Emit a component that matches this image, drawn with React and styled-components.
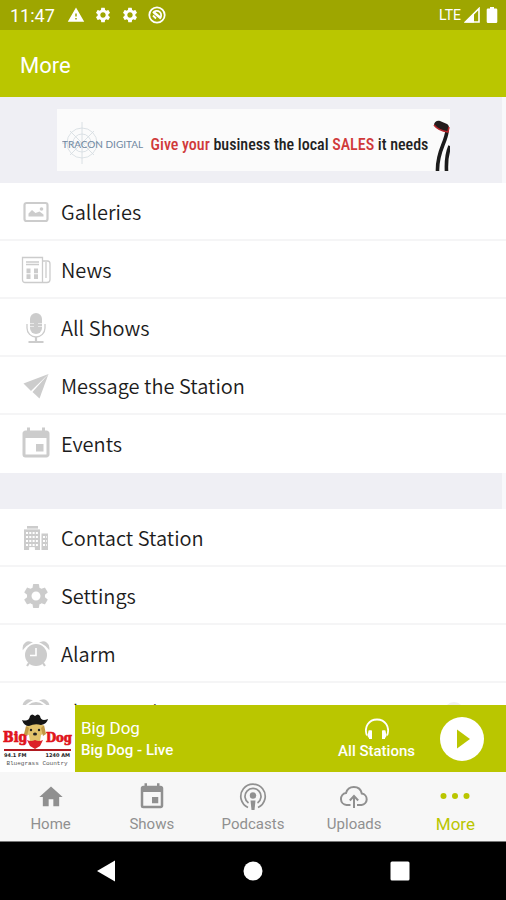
import React from 'react';
import styled, { ThemeProvider, createGlobalStyle } from 'styled-components';
import { MdEvent, MdHome, MdSettings, MdWarning } from 'react-icons/md';

const theme = {
  colors: {
    primary: '#bac600',
    primaryDark: '#9ea600',
    section: '#efeff4',
    divider: '#f5f5f6',
    icon: '#cccccc',
    tab: '#909090',
    tabBar: '#f7f7f7',
    text: '#1c1c1c',
  },
  fonts: {
    base: 'Roboto, sans-serif',
    list: '"Noto Sans CJK SC", "Noto Sans", sans-serif',
    banner: '"Roboto Condensed", "Liberation Sans Narrow", "Liberation Sans", sans-serif',
  },
};

const GlobalStyle = createGlobalStyle`
  * {
    box-sizing: border-box;
  }
  body {
    margin: 0;
    background: #fff;
  }
  button {
    border: 0;
    padding: 0;
    background: none;
    font: inherit;
    color: inherit;
    cursor: pointer;
  }
  svg {
    display: block;
    flex: none;
  }
`;

const AppContainer = styled.div`
  display: flex;
  flex-direction: column;
  height: 100vh;
  font-family: ${(props) => props.theme.fonts.base};
  color: ${(props) => props.theme.colors.text};
`;

const StatusBar = styled.div`
  display: flex;
  flex: none;
  align-items: center;
  justify-content: space-between;
  height: 30px;
  padding: 0 8px 0 10px;
  background: ${(props) => props.theme.colors.primaryDark};
  color: #fff;
  font-size: 18px;
`;

const StatusGroup = styled.div`
  display: flex;
  align-items: center;
  gap: ${(props) => props.$gap}px;
`;

const Time = styled.span`
  margin-right: 3px;
`;

const Network = styled.span`
  font-size: 14px;
`;

const Header = styled.header`
  display: flex;
  flex: none;
  align-items: center;
  height: 67px;
  padding: 3px 20px 0;
  background: ${(props) => props.theme.colors.primary};
  color: #fff;
`;

const Title = styled.h1`
  margin: 0;
  font-size: 22px;
  font-weight: 400;
`;

const Content = styled.main`
  flex: 1;
  min-height: 0;
  overflow-y: auto;
  scrollbar-width: none;
`;

const BannerArea = styled.div`
  padding: 12px 52px 12px 57px;
  border-right: 4px solid #f8f8fb;
  background: ${(props) => props.theme.colors.section};
`;

const Banner = styled.a`
  display: flex;
  align-items: center;
  justify-content: space-between;
  height: 62px;
  padding-top: 8px;
  padding-left: 5px;
  background: #fbfbfb;
  color: #222;
  text-decoration: none;
  white-space: nowrap;
`;

const Slogan = styled.span`
  font-family: ${(props) => props.theme.fonts.banner};
  font-size: 16px;
  font-weight: 500;
`;

const Accent = styled.span`
  color: #d0393a;
`;

const Menu = styled.ul`
  margin: 0;
  padding: 0;
  list-style: none;
`;

const MenuItem = styled.li`
  border-bottom: 2px solid ${(props) => props.theme.colors.divider};

  &:last-child {
    border-bottom-color: transparent;
  }
`;

const MenuRow = styled.button`
  display: flex;
  align-items: center;
  gap: 10px;
  width: 100%;
  height: 56px;
  padding: 1px 32px 0 21px;
  font-family: ${(props) => props.theme.fonts.list};
  font-size: 20px;
  font-weight: 350;
  line-height: 28px;
  text-align: left;
`;

const MenuIcon = styled.span`
  display: flex;
  flex: none;
  justify-content: center;
  width: 30px;
  color: ${(props) => props.theme.colors.icon};
`;

const Divider = styled.div`
  height: 36px;
  border-right: 4px solid #f8f8fb;
  background: ${(props) => props.theme.colors.section};
`;

const SwitchLabel = styled.label`
  flex: 1;
`;

const Switch = styled.input`
  appearance: none;
  display: flex;
  align-items: center;
  width: 30px;
  height: 14px;
  margin: 0;
  border-radius: 7px;
  background: #e0e0e0;

  &::before {
    content: '';
    width: 20px;
    height: 20px;
    border-radius: 50%;
    background: #f0f0f0;
  }
`;

const Player = styled.section`
  display: flex;
  flex: none;
  align-items: center;
  height: 67px;
  padding-right: 22px;
  background: ${(props) => props.theme.colors.primary};
  color: #fff;
`;

const Cover = styled.div`
  flex: none;
  align-self: stretch;
  width: 75px;
  background: #fff;
`;

const Track = styled.div`
  flex: 1;
  padding-left: 6px;
`;

const TrackTitle = styled.div`
  font-size: 17px;
  line-height: 22px;
`;

const TrackShow = styled.div`
  font-size: 15px;
  font-weight: 500;
  line-height: 22px;
`;

const StationsButton = styled.button`
  display: flex;
  flex-direction: column;
  align-items: center;
  gap: 2px;
  margin-right: 25px;
  font-size: 15px;
  font-weight: 500;
  line-height: 18px;
`;

const PlayButton = styled.button`
  display: flex;
  flex: none;
  align-items: center;
  justify-content: center;
  width: 44px;
  height: 44px;
  border-radius: 50%;
  background: #fff;
  color: ${(props) => props.theme.colors.primary};
`;

const TabBar = styled.nav`
  display: flex;
  flex: none;
  height: 70px;
  border-bottom: 1px solid #777;
  background: ${(props) => props.theme.colors.tabBar};
`;

const Tab = styled.a`
  display: flex;
  flex: 1;
  flex-direction: column;
  align-items: center;
  gap: 3px;
  padding-top: 11px;
  color: ${(props) => (props.$active ? props.theme.colors.primary : props.theme.colors.tab)};
  font-size: ${(props) => (props.$active ? 17 : 15)}px;
  line-height: 20px;
  text-decoration: none;
`;

const TabIcon = styled.span`
  display: flex;
  align-items: center;
  height: 28px;
`;

const SystemBar = styled.div`
  display: flex;
  flex: none;
  align-items: center;
  height: 58px;
  padding: 0 32px;
  background: #000;
  color: #fff;
`;

const SystemButton = styled.button`
  display: flex;
  flex: 1;
  justify-content: center;
`;

function DndIcon() {
  return (
    <svg width="18" height="18" viewBox="0 0 18 18" fill="none" stroke="currentColor" strokeWidth="1.8">
      <circle cx="9" cy="9" r="7.7" />
      <path d="M5 7a4.400 4.400 0 1 1 6.500 5.700" />
      <path d="M6 6.500l6 5" strokeWidth="2.600" />
      <path d="M5 9.500l3 3" />
    </svg>
  );
}

function SignalIcon() {
  return (
    <svg width="16" height="16" viewBox="0 0 16 16">
      <path d="M15 1.500V15H1.500z" fill="none" stroke="currentColor" strokeWidth="1.600" />
      <path d="M1 15.500L10 6v9.500z" fill="currentColor" />
    </svg>
  );
}

function BatteryIcon() {
  return (
    <svg width="12" height="18" viewBox="0 0 12 18" fill="currentColor">
      <path d="M4 1h4v1.500h2a1.300 1.300 0 0 1 1.300 1.300v12a1.300 1.300 0 0 1-1.300 1.300H2a1.300 1.300 0 0 1-1.300-1.300v-12A1.300 1.300 0 0 1 2 2.500h2z" />
    </svg>
  );
}

function TraconLogo() {
  return (
    <svg width="84" height="46" viewBox="0 0 84 46">
      <g fill="none" stroke="#d3dae0" strokeWidth="0.800">
        <circle cx="20" cy="22" r="15" />
        <circle cx="20" cy="22" r="9" />
        <path d="M20 1v42M0 22h40M8 10l24 24M32 10L8 34" />
      </g>
      <text x="0" y="27" fontFamily="Lato, sans-serif" fontSize="10" fill="#6f87a0">
        TRACON DIGITAL
      </text>
    </svg>
  );
}

function ClubIcon() {
  return (
    <svg width="17" height="54" viewBox="0 0 17 54">
      <path d="M14 14C13 26 4 34 4.500 54M17 29c-3 7-4 14-3.500 25" fill="none" stroke="#1b1b1b" strokeWidth="3.600" />
      <path d="M1 8C1 5 4 3 7 4l7 3c2 1 3 5 1 8-5-1-10-2-14-7z" fill="#241c1c" />
      <path d="M1 8c3 4 8 6 14 7l1-5" fill="none" stroke="#b8262c" strokeWidth="1.500" />
    </svg>
  );
}

function GalleryIcon() {
  return (
    <svg width="26" height="22" viewBox="0 0 26 22">
      <rect x="1.500" y="2" width="23" height="18" rx="2" fill="none" stroke="currentColor" strokeWidth="2.200" />
      <path d="M5.500 15.500v-3l3.500-3.500 3.500 3 4-1.500 4 3v2z" fill="currentColor" />
      <circle cx="18.500" cy="8" r="1.800" fill="currentColor" />
    </svg>
  );
}

function NewsIcon() {
  return (
    <svg width="30" height="28" viewBox="0 0 30 28" fill="none" stroke="currentColor" strokeWidth="1.300">
      <path d="M1.500 1.500h20V26.500H4a2.500 2.500 0 0 1-2.500-2.500zM21.500 5h5q2.500 0 2.500 3v15.500q0 3-3 3h-4.500M25 6v16" />
      <path d="M5 6h13M5 8.500h13" strokeWidth="1.500" />
      <path d="M7.500 12.500v11M15 12.500v11" strokeWidth="4" strokeDasharray="4.800 1" />
    </svg>
  );
}

function MicIcon() {
  return (
    <svg width="22" height="32" viewBox="0 0 22 32" fill="none" stroke="currentColor">
      <rect x="5" y="1" width="12" height="21" rx="6" fill="currentColor" stroke="none" />
      <path d="M5 11.500h4M13 11.500h4M5 14.500h4M13 14.500h4" stroke="#fff" strokeWidth="0.600" />
      <path d="M2 12v4c0 5 4 9 9 9s9-4 9-9v-4" strokeWidth="1.300" />
      <path d="M11 25v5M3.500 30h15" strokeWidth="2.200" />
    </svg>
  );
}

function SendIcon() {
  return (
    <svg width="26" height="26" viewBox="0 0 26 26" fill="currentColor">
      <path d="M25.500 1L0.500 10.500l7.500 7.500z" />
      <path d="M25.500 1L9.500 19l7 6.500z" />
    </svg>
  );
}

function BuildingIcon() {
  return (
    <svg width="26" height="26" viewBox="0 0 26 26">
      <path d="M4 1h11v3h2v21H1V4h3zM18.500 8.500H25V25h-6.500z" fill="currentColor" />
      <path
        d="M3 8h12M3 12h12M3 16h12M3 20h12M20 12h4M20 16h4M20 20h4"
        stroke="#fff"
        strokeWidth="2"
        strokeDasharray="2 1.300"
      />
      <path d="M1 4h16M6.500 22.500h5V25h-5z" fill="#fff" stroke="#fff" strokeWidth="0.800" />
    </svg>
  );
}

function AlarmIcon() {
  return (
    <svg width="28" height="28" viewBox="0 0 28 28">
      <circle cx="14" cy="15" r="11" fill="currentColor" />
      <path
        d="M1.500 8A5.500 5.500 0 0 1 8.500 2.500Q4.500 4.500 1.500 8zM26.500 8a5.500 5.500 0 0 0-7-5.500Q23.500 4.500 26.500 8z"
        fill="currentColor"
        stroke="currentColor"
        strokeWidth="1.800"
      />
      <path d="M7 23l-2 3M21 23l2 3" stroke="currentColor" strokeWidth="2.200" />
      <path d="M14 8v7.500H8" fill="none" stroke="#fff" strokeWidth="1.600" />
    </svg>
  );
}

function HeadphonesIcon() {
  return (
    <svg width="24" height="22" viewBox="0 0 24 22" fill="none" stroke="currentColor">
      <path d="M2 17.500C-1.500 9 4 1.500 12 1.500S25.500 9 22 17.500" strokeWidth="1.800" />
      <path d="M3.500 12.500h2.800V21H4.500l-2-3z" fill="currentColor" stroke="none" />
      <path d="M20.500 12.500h-2.800V21h1.800l2-3z" fill="currentColor" stroke="none" />
      <path d="M5.500 12.500V21M18.500 12.500V21" strokeWidth="3" />
    </svg>
  );
}

function PodcastIcon() {
  return (
    <svg width="28" height="28" viewBox="0 0 28 28" fill="none" stroke="currentColor" strokeWidth="1.700">
      <path d="M9 24.500a12.200 12.200 0 1 1 10 0" />
      <path d="M9.500 20a8 8 0 1 1 9 0" />
      <circle cx="14" cy="12.500" r="3.200" fill="currentColor" stroke="none" />
      <path d="M11.500 17.500h5L15.500 27h-3z" fill="currentColor" stroke="none" />
    </svg>
  );
}

function CloudUploadIcon() {
  return (
    <svg width="30" height="24" viewBox="0 0 30 24" fill="none" stroke="currentColor" strokeWidth="2">
      <path d="M11.500 20H7.500a6 6 0 0 1-.5-11.900C8 4.500 11 2 14.800 2c4 0 7.200 2.500 8 6.500A5.800 5.800 0 0 1 22.500 20H18" />
      <path d="M15 23V11.500M10.800 15.500L15 11l4.200 4.500" />
    </svg>
  );
}

function DotsIcon() {
  return (
    <svg width="30" height="8" viewBox="0 0 30 8" fill="currentColor">
      <circle cx="3.500" cy="3" r="3" />
      <circle cx="15" cy="3" r="3" />
      <circle cx="26.500" cy="3" r="3" />
    </svg>
  );
}

function PlayIcon() {
  return (
    <svg width="18" height="20" viewBox="0 0 18 20" fill="currentColor">
      <path d="M4 0.500l13 9.500L4 19.500z" />
    </svg>
  );
}

function BigDogLogo() {
  return (
    <svg width="75" height="67" viewBox="0 0 75 67">
      <g
        fontFamily="'DejaVu Serif Condensed', 'DejaVu Serif', serif"
        fontWeight="700"
        fontSize="14"
        fill="#e0141c"
        stroke="#e0141c"
        strokeWidth="0.700"
      >
        <text x="3" y="37">Big</text>
        <text x="72" y="37" textAnchor="end" fontSize="13">Dog</text>
      </g>
      <path d="M27 20q8-6 16 0l2 8-4 2-1 6q-5 5-10 0l-1-6-4-1z" fill="#e2c36b" />
      <path d="M26 21l3 2-2 8-3-2zM44 20l-3 3 2 8 3-2z" fill="#c39a45" />
      <path d="M22 15q7 2 8-4 2-3 5 0 3-3 5 0 1 6 8 3-1 5-7 6-6-2-12 1-5 0-7-6z" fill="#151515" />
      <circle cx="31" cy="25" r="1.200" fill="#222" />
      <circle cx="39" cy="25" r="1.200" fill="#222" />
      <ellipse cx="35" cy="29" rx="2" ry="1.500" fill="#222" />
      <path d="M27 35q4 2 8 0 4 2 8 0l-3 6-5 3-5-3z" fill="#dc2128" />
      <path d="M4 45h67" stroke="#b01a20" strokeWidth="1.800" />
      <g fontFamily="DejaVu Sans, sans-serif" fontWeight="700" fontSize="5" fill="#222">
        <text x="4" y="52">94.1 FM</text>
        <text x="70" y="52" textAnchor="end">1240 AM</text>
      </g>
      <text x="37" y="60" textAnchor="middle" fontFamily="Liberation Mono, monospace" fontSize="6" fill="#555">
        Bluegrass Country
      </text>
    </svg>
  );
}

const mainItems = [
  { label: 'Galleries', icon: <GalleryIcon /> },
  { label: 'News', icon: <NewsIcon /> },
  { label: 'All Shows', icon: <MicIcon /> },
  { label: 'Message the Station', icon: <SendIcon /> },
  { label: 'Events', icon: <MdEvent size={36} /> },
];

const settingItems = [
  { label: 'Contact Station', icon: <BuildingIcon /> },
  { label: 'Settings', icon: <MdSettings size={30} /> },
  { label: 'Alarm', icon: <AlarmIcon /> },
];

const tabs = [
  { label: 'Home', icon: <MdHome size={28} /> },
  { label: 'Shows', icon: <MdEvent size={30} /> },
  { label: 'Podcasts', icon: <PodcastIcon /> },
  { label: 'Uploads', icon: <CloudUploadIcon /> },
  { label: 'More', icon: <DotsIcon />, active: true },
];

function MenuEntry({ item }) {
  return (
    <MenuItem>
      <MenuRow type="button">
        <MenuIcon>{item.icon}</MenuIcon>
        {item.label}
      </MenuRow>
    </MenuItem>
  );
}

function App() {
  return (
    <ThemeProvider theme={theme}>
      <GlobalStyle />
      <AppContainer>
        <StatusBar>
          <StatusGroup $gap={9}>
            <Time>11:47</Time>
            <MdWarning size={18} />
            <MdSettings size={18} />
            <MdSettings size={18} />
            <DndIcon />
          </StatusGroup>
          <StatusGroup $gap={3}>
            <Network>LTE</Network>
            <SignalIcon />
            <span />
            <BatteryIcon />
          </StatusGroup>
        </StatusBar>

        <Header>
          <Title>More</Title>
        </Header>

        <Content>
          <BannerArea>
            <Banner href="#">
              <TraconLogo />
              <Slogan>
                <Accent>Give your</Accent> business the local <Accent>SALES</Accent> it needs
              </Slogan>
              <ClubIcon />
            </Banner>
          </BannerArea>
          <Menu>
            {mainItems.map((item) => (
              <MenuEntry key={item.label} item={item} />
            ))}
          </Menu>
          <Divider />
          <Menu>
            {settingItems.map((item) => (
              <MenuEntry key={item.label} item={item} />
            ))}
            <MenuItem>
              <MenuRow as="div">
                <MenuIcon>
                  <AlarmIcon />
                </MenuIcon>
                <SwitchLabel htmlFor="sleep-mode">Sleep Mode</SwitchLabel>
                <Switch id="sleep-mode" type="checkbox" role="switch" />
              </MenuRow>
            </MenuItem>
          </Menu>
        </Content>

        <Player>
          <Cover>
            <BigDogLogo />
          </Cover>
          <Track>
            <TrackTitle>Big Dog</TrackTitle>
            <TrackShow>Big Dog - Live</TrackShow>
          </Track>
          <StationsButton type="button">
            <HeadphonesIcon />
            All Stations
          </StationsButton>
          <PlayButton type="button" aria-label="Play">
            <PlayIcon />
          </PlayButton>
        </Player>

        <TabBar>
          {tabs.map((tab) => (
            <Tab key={tab.label} href="#" $active={tab.active}>
              <TabIcon>{tab.icon}</TabIcon>
              {tab.label}
            </Tab>
          ))}
        </TabBar>

        <SystemBar>
          <SystemButton type="button" aria-label="Back">
            <svg width="20" height="22" viewBox="0 0 20 22" fill="currentColor">
              <path d="M19 0.500v21L1 11z" />
            </svg>
          </SystemButton>
          <SystemButton type="button" aria-label="Home screen">
            <svg width="20" height="20" viewBox="0 0 20 20" fill="currentColor">
              <circle cx="10" cy="10" r="9.500" />
            </svg>
          </SystemButton>
          <SystemButton type="button" aria-label="Recent apps">
            <svg width="20" height="20" viewBox="0 0 20 20" fill="currentColor">
              <rect x="0.500" y="0.500" width="19" height="19" rx="1.500" />
            </svg>
          </SystemButton>
        </SystemBar>
      </AppContainer>
    </ThemeProvider>
  );
}

export default App;
